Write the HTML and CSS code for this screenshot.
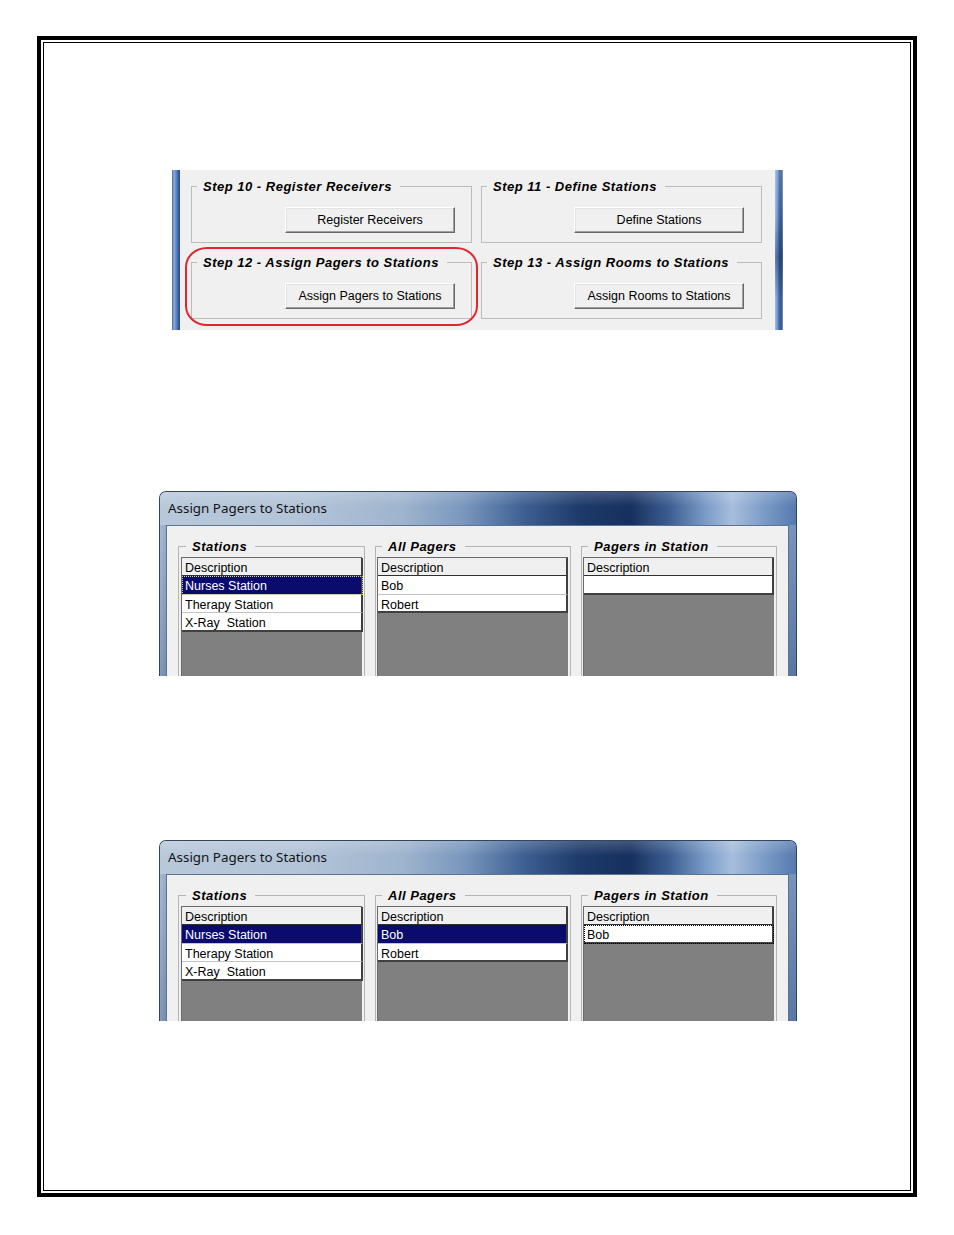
FILE: index.html
```html
<!DOCTYPE html>
<html>
<head>
<meta charset="utf-8">
<title>Assign Pagers to Stations</title>
<link rel="stylesheet" href="styles.css">
</head>
<body>
<div class="page">
  <div class="page-inner">

    <section class="steps">
      <div class="bar bar-left"></div>
      <div class="steps-body">
        <div class="col">
          <fieldset class="group"><legend>Step 10 - Register Receivers</legend><button class="btn">Register Receivers</button></fieldset>
          <fieldset class="group"><legend>Step 12 - Assign Pagers to Stations</legend><button class="btn">Assign Pagers to Stations</button></fieldset>
          <div class="highlight"></div>
        </div>
        <div class="col">
          <fieldset class="group"><legend>Step 11 - Define Stations</legend><button class="btn btn-r">Define Stations</button></fieldset>
          <fieldset class="group"><legend>Step 13 - Assign Rooms to Stations</legend><button class="btn btn-r">Assign Rooms to Stations</button></fieldset>
        </div>
      </div>
      <div class="bar bar-right"></div>
    </section>

    <section class="dialog dialog-one">
      <div class="titlebar">Assign Pagers to Stations</div>
      <div class="client">
        <fieldset class="frame frame-narrow"><legend>Stations</legend>
          <div class="grid">
            <div class="cell head">Description</div>
            <div class="cell sel focus-y">Nurses Station</div>
            <div class="cell">Therapy Station</div>
            <div class="cell last">X-Ray&nbsp; Station</div>
          </div>
        </fieldset>
        <fieldset class="frame"><legend>All Pagers</legend>
          <div class="grid">
            <div class="cell head">Description</div>
            <div class="cell">Bob</div>
            <div class="cell last">Robert</div>
          </div>
        </fieldset>
        <fieldset class="frame"><legend>Pagers in Station</legend>
          <div class="grid">
            <div class="cell head">Description</div>
            <div class="cell last"></div>
          </div>
        </fieldset>
      </div>
    </section>

    <section class="dialog dialog-two">
      <div class="titlebar">Assign Pagers to Stations</div>
      <div class="client">
        <fieldset class="frame frame-narrow"><legend>Stations</legend>
          <div class="grid">
            <div class="cell head">Description</div>
            <div class="cell sel">Nurses Station</div>
            <div class="cell">Therapy Station</div>
            <div class="cell last">X-Ray&nbsp; Station</div>
          </div>
        </fieldset>
        <fieldset class="frame"><legend>All Pagers</legend>
          <div class="grid">
            <div class="cell head">Description</div>
            <div class="cell sel">Bob</div>
            <div class="cell last">Robert</div>
          </div>
        </fieldset>
        <fieldset class="frame"><legend>Pagers in Station</legend>
          <div class="grid">
            <div class="cell head">Description</div>
            <div class="cell last focus-d">Bob</div>
          </div>
        </fieldset>
      </div>
    </section>

  </div>
</div>
</body>
</html>
```

FILE: styles.css
```css
html, body {
  margin: 0;
  padding: 0;
  background: #ffffff;
}
body {
  font-family: "Liberation Sans", Arial, sans-serif;
  color: #000;
}

/* page double border */
.page {
  margin: 36px 0 0 37px;
  width: 880px;
  height: 1161px;
  box-sizing: border-box;
  border: 4px solid #000;
  padding: 2px;
}
.page-inner {
  box-sizing: border-box;
  height: 100%;
  border: 1px solid #000;
  display: flex;
  flex-direction: column;
  align-items: flex-start;
}

/* ---------- steps panel ---------- */
.steps {
  margin: 127px 0 0 128px;
  width: 611px;
  height: 160px;
  display: flex;
  background: #f0f0f0;
}
.bar {
  width: 8px;
  flex: none;
}
.bar-left {
  background: linear-gradient(90deg, #56688a 0%, #8aaee0 25%, #5b84c8 55%, #2f5597 85%, #3d4c66 100%);
}
.bar-right {
  background:
    linear-gradient(180deg, rgba(255,255,255,0.15) 0%, rgba(0,0,0,0) 30%, rgba(0,20,60,0.35) 55%, rgba(0,0,0,0) 80%),
    linear-gradient(90deg, #a9bbd6 0%, #6d96d3 30%, #2f5fa8 60%, #3d5a86 80%, #8a96a8 100%);
}
.steps-body {
  flex: 1;
  display: flex;
  gap: 9px;
  padding: 8px 13px 0 11px;
}
.col {
  position: relative;
  width: 281px;
  display: flex;
  flex-direction: column;
  gap: 11px;
}
.group {
  margin: 0;
  min-width: 0;
  padding: 13px 0 9px 0;
  border: 1px solid #bcbcbc;
}
.group legend,
.frame legend {
  font-size: 13px;
  font-weight: bold;
  font-style: italic;
  letter-spacing: 0.5px;
  line-height: 15px;
  padding: 1px 8px 0 6px;
  margin-left: 5px;
  color: #000;
}
.btn {
  display: block;
  margin-left: 93px;
  width: 170px;
  height: 26px;
  box-sizing: border-box;
  padding: 0;
  background: #f0f0f0;
  border: 1px solid;
  border-color: #ffffff #696969 #696969 #ffffff;
  box-shadow: inset -1px -1px #a0a0a0, inset 1px 1px #e3e3e3;
  font-family: "Liberation Sans", Arial, sans-serif;
  font-size: 12.5px;
  color: #000;
}
.btn-r {
  margin-left: 92px;
  width: 170px;
}
.highlight {
  position: absolute;
  left: -6px;
  top: 69px;
  width: 293px;
  height: 79px;
  box-sizing: border-box;
  border: 2.5px solid #e3262e;
  border-radius: 22px / 20px;
  pointer-events: none;
}

/* ---------- dialogs ---------- */
.dialog {
  margin-left: 115px;
  width: 638px;
  box-sizing: border-box;
  border: 1px solid #34455c;
  border-bottom: none;
  border-radius: 7px 7px 0 0;
  overflow: hidden;
  display: flex;
  flex-direction: column;
  background:
    linear-gradient(180deg, rgba(255,255,255,0.1) 0%, rgba(20,50,100,0.25) 100%),
    linear-gradient(90deg, #a9bcd3 0%, #8aa6c9 1.2%, #6f8fb9 100%);
}
.dialog-one {
  margin-top: 161px;
  height: 185px;
}
.dialog-two {
  margin-top: 164px;
  height: 181px;
}
.titlebar {
  flex: none;
  height: 33px;
  line-height: 33px;
  padding-left: 8px;
  font-family: "Noto Sans", "Open Sans", sans-serif;
  font-size: 13.4px;
  color: #141414;
  background:
    linear-gradient(180deg, rgba(255,255,255,0.18) 0%, rgba(255,255,255,0) 45%),
    linear-gradient(90deg,
      #b8c8da 0%,
      #b3c4d8 22%,
      #9fb4ce 38%,
      #7896bd 48%,
      #3f6093 57%,
      #1d3a6a 66%,
      #16305e 74%,
      #3c5d92 80%,
      #7d9dc9 86%,
      #a6bedc 90%,
      #7b9bc7 95%,
      #557aae 100%);
}
.client {
  flex: 1;
  min-height: 0;
  margin: 0 7px 0 6px;
  background: #f0f0f0;
  border: 1px solid #5f7391;
  border-bottom: none;
  display: flex;
  align-items: stretch;
  gap: 10px;
  padding: 12px 11px 0 11px;
}
.frame {
  margin: 0;
  min-width: 0;
  width: 196px;
  box-sizing: border-box;
  padding: 3px 2px 0 1px;
  border: 1px solid #b4b4b4;
  border-bottom: none;
  display: flex;
  flex-direction: column;
}
.frame-narrow {
  width: 187px;
  padding: 3px 2px 0 2px;
}
.grid {
  flex: 1;
  background: #808080;
  border-top: 1px solid #6a6a6a;
  border-left: 1px solid #6a6a6a;
  display: flex;
  flex-direction: column;
}
.cell {
  flex: none;
  box-sizing: border-box;
  height: 18.5px;
  line-height: 18px;
  padding: 1px 0 0 3px;
  font-size: 12.5px;
  white-space: nowrap;
  background: #ffffff;
  color: #000;
  border-bottom: 1px solid #c4c4c4;
  border-right: 2px solid #404040;
  width: 190px;
}
.frame-narrow .cell {
  width: 181px;
}
.cell.head {
  height: 18px;
  background: #f0f0f0;
  border-bottom: 1px solid #303030;
}
.cell.last {
  border-bottom: 2px solid #404040;
}
.cell.sel {
  background: #0b0b6e;
  color: #ffffff;
}
.cell.focus-y {
  outline: 1px dotted #d8d490;
  outline-offset: -1px;
}
.cell.focus-d {
  outline: 1px dotted #000;
  outline-offset: -1px;
}
```
